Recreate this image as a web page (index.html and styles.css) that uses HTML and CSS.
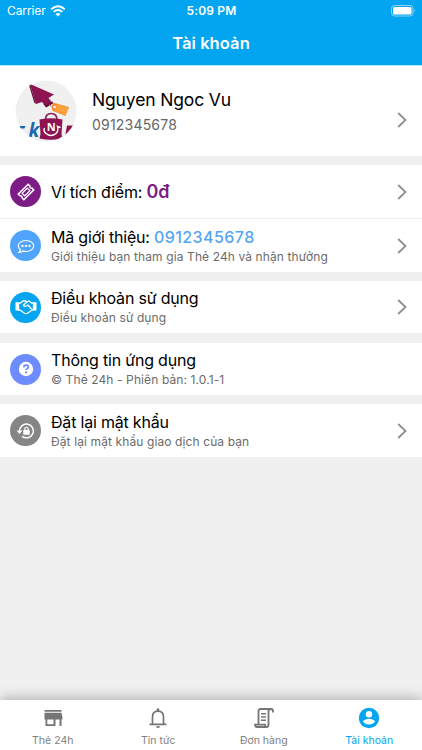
FILE: index.html
```
<!DOCTYPE html>
<html lang="vi">
<head>
<meta charset="utf-8">
<title>Tài khoản</title>
<link rel="stylesheet" href="styles.css">
</head>
<body>
<div class="app">
  <header class="header">
    <div class="status">
      <div class="carrier"><span>Carrier</span>
        <svg width="16" height="12" viewBox="0 0 15 12" fill="none" stroke="#fff" stroke-width="1.9"><path d="M.7 4.2Q7.5-1.8 14.3 4.2M3.1 6.9q4.4-3.8 8.800 0"/><path d="M5 9q2.500-2 5 0l-2.500 2.600z" fill="#fff" stroke="none"/></svg>
      </div>
      <span class="time">5:09 PM</span>
      <svg class="battery" width="25" height="12" viewBox="0 0 25 12"><rect x=".5" y=".5" width="21.500" height="10.500" rx="3" fill="none" stroke="#8bd3f8"/><rect x="2" y="2" width="18.500" height="7.500" rx="1.500" fill="#fff"/><path d="M23.200 4q1.800 1.700 0 3.600z" fill="#8bd3f8"/></svg>
    </div>
    <h1>Tài khoản</h1>
  </header>
  <main>
    <section class="card profile">
      <svg class="avatar" width="62" height="62" viewBox="0 0 62 62">
        <defs><clipPath id="round"><circle cx="31" cy="31" r="30.500"/></clipPath></defs>
        <g clip-path="url(#round)">
          <rect width="62" height="62" fill="#f0f0f0"/>
          <path d="M15 4l24 10.500-5.500 3.500 4 5-6 4-4.500-5-6 2z" fill="#8d1451"/>
          <path d="M15 4l6 20-1.800-1.500L14 5z" fill="#5d1038"/>
          <path d="M28 23.500l3 4 7-4-.5-2-6 3.300z" fill="#620c39"/>
          <path d="M34 24q2 4 6 2" fill="none" stroke="#976b79" stroke-width=".8"/>
          <path d="M38.500 22.800l15.500 4.200-3.500 9L37.500 30.800l-1-4z" fill="#f68b2d"/><path d="M42 24.500l11.500 3-3 8L40 31z" fill="#fba13d"/><circle cx="39.500" cy="27" r="1.300" fill="#fff"/>
          <text class="brand" x="13.500" y="57">k</text>
          <path d="M4 46h6.500l-1 2.500H4z" fill="#1769b3"/>
          <path d="M30.500 41q-.5-7.500 5.700-7.500T42 41" fill="none" stroke="#8d2558" stroke-width="1.700"/>
          <path d="M24.500 39.500q11.500-2.500 23 0L46.500 54l1 4.500q-11.500 2.500-23 0l1-4.500z" fill="#8d1451"/>
          <text class="mark" x="31.700" y="51">N</text>
          <path d="M29.500 48q-1.500 3 1.500 5.500 5 4 10 0 3-3 1.500-7l3 1" fill="none" stroke="#fff" stroke-width="1.400"/>
          <path d="M52 45.500h7v5h-4l-3 6h-2z" fill="#8d1451"/>
        </g>
      </svg>
      <div class="info"><div class="name">Nguyen Ngoc Vu</div><div class="phone">0912345678</div></div>
      <svg class="chevron" width="10" height="16" viewBox="0 0 10 16"><path d="M1.200 1l7.300 7-7.300 7"/></svg>
    </section>

    <div class="card">
      <div class="row">
        <span class="badge purple"><svg width="20" height="20" viewBox="0 0 20 20"><g transform="rotate(-45 10 10)" fill="none" stroke="#fff" stroke-width="1.500"><path d="M3 6h14v2.500a1.700 1.700 0 0 0 0 3V14H3v-2.500a1.700 1.700 0 0 0 0-3z"/><rect x="6.300" y="8.200" width="7.400" height="3.600" stroke-width="1.200"/></g></svg></span>
        <div class="info"><div class="title">Ví tích điểm: <b class="points">0đ</b></div></div>
        <svg class="chevron" width="10" height="16" viewBox="0 0 10 16"><path d="M1.200 1l7.300 7-7.300 7"/></svg>
      </div>
      <div class="row divided">
        <span class="badge blue"><svg width="20" height="20" viewBox="0 0 20 20"><path d="M10 4.500c4.500 0 7.700 2.500 7.700 5.500s-3.200 5.500-7.700 5.500q-1.700 0-3-.5-1.500 1.200-4 1.300 1.200-1.200 1.300-2.900-2-1.500-2-3.400c0-3 3.200-5.500 7.700-5.500z" fill="none" stroke="#fff" stroke-width="1.200"/><g fill="#fff"><circle cx="6.500" cy="10" r="1.150"/><circle cx="10" cy="10" r="1.150"/><circle cx="13.500" cy="10" r="1.150"/></g></svg></span>
        <div class="info"><div class="title">Mã giới thiệu: <span class="code">0912345678</span></div><div class="sub">Giới thiệu bạn tham gia Thẻ 24h và nhận thưởng</div></div>
        <svg class="chevron" width="10" height="16" viewBox="0 0 10 16"><path d="M1.200 1l7.300 7-7.300 7"/></svg>
      </div>
    </div>

    <div class="card">
      <div class="row short">
        <span class="badge cyan"><svg width="22" height="18" viewBox="0 0 22 18"><g fill="none" stroke="#fff" stroke-width="1.300" stroke-linejoin="round"><path d="M3.500 5h2l2.500-2h3l1.500.8L14 3l2.500 2h2v7H17l-4.500 3.200q-1.500.8-3 0L5 12H3.500z"/><path d="M12 4L8.500 7q.8 2.200 3.300.8L13 7l3.700 4.300"/></g><path d="M.5 4.300h3v8.200h-3zM18.500 4.300h3v8.200h-3z" fill="#fff"/></svg></span>
        <div class="info"><div class="title">Điều khoản sử dụng</div><div class="sub">Điều khoản sử dụng</div></div>
        <svg class="chevron" width="10" height="16" viewBox="0 0 10 16"><path d="M1.200 1l7.300 7-7.300 7"/></svg>
      </div>
    </div>

    <div class="card spaced">
      <div class="row short">
        <span class="badge indigo"><svg width="16" height="16" viewBox="0 0 16 16"><circle cx="8" cy="8" r="7.200" fill="#fff"/><path d="M5.700 6.400q.2-2.300 2.400-2.300 2.300 0 2.300 1.900 0 1.100-1.300 1.800-1 .5-1 1.300" fill="none" stroke="#6c8cff" stroke-width="1.700"/><circle cx="8.050" cy="11.400" r="1.100" fill="#6c8cff"/></svg></span>
        <div class="info"><div class="title">Thông tin ứng dụng</div><div class="sub">© Thẻ 24h - Phiên bản: 1.0.1-1</div></div>
      </div>
    </div>

    <div class="card">
      <div class="row">
        <span class="badge gray"><svg width="20" height="20" viewBox="0 0 20 20"><path d="M3.600 10.500a6.900 6.900 0 1 1 2.400 4.700" fill="none" stroke="#fff" stroke-width="1.500"/><path d="M.5 9.500h6l-3 3.400z" fill="#fff"/><rect x="7.300" y="8.800" width="6.400" height="5" rx=".6" fill="#fff"/><path d="M8.800 9V7.800q0-1.600 1.700-1.600t1.700 1.600V9" fill="none" stroke="#fff" stroke-width="1.100"/></svg></span>
        <div class="info"><div class="title">Đặt lại mật khẩu</div><div class="sub">Đặt lại mật khẩu giao dịch của bạn</div></div>
        <svg class="chevron" width="10" height="16" viewBox="0 0 10 16"><path d="M1.200 1l7.300 7-7.300 7"/></svg>
      </div>
    </div>
  </main>
  <nav class="tabs">
    <a class="tab"><svg width="24" height="24" viewBox="0 0 24 24"><path d="M3.500 4h17v1.700h-17zM3.500 6.800h17l1 5v1.700h-1V20h-2v-6.500h-4V20h-10v-6.500h-1v-1.700zM6.300 13.500v4.700h6.200v-4.700z" fill="#757575" fill-rule="evenodd"/></svg><span>Thẻ 24h</span></a>
    <a class="tab"><svg width="24" height="24" viewBox="0 0 24 24"><path d="M6.500 18.400V11q0-5.800 5.500-5.800T17.500 11v7.400M3.500 18.400h17" fill="none" stroke="#757575" stroke-width="1.700"/><path d="M10.700 5V3.500q0-1.300 1.300-1.300t1.300 1.300V5zM10 20.200h4q-.3 1.900-2 1.900t-2-1.900z" fill="#757575"/></svg><span>Tin tức</span></a>
    <a class="tab"><svg width="24" height="24" viewBox="0 0 24 24"><path d="M6.500 18V5q0-2 2-2h10.800q1.700 0 1.700 2.500v1M18.800 3q-2.300 0-2.300 2.500v13q0 2.500-2 2.500H5q-2 0-2-2.300h10q0 2.300 1.500 2.300" fill="none" stroke="#757575" stroke-width="1.800"/><path d="M9 7.700h5M9 11h5M9 14.300h5" stroke="#757575" stroke-width="1.500"/></svg><span>Đơn hàng</span></a>
    <a class="tab active"><svg width="24" height="24" viewBox="0 0 24 24"><circle cx="12" cy="12" r="10.200" fill="#03a5f1"/><circle cx="12" cy="8.200" r="3.200" fill="#fff"/><path d="M5.800 15.300q2-2.600 6.200-2.600t6.200 2.600Q16 18.600 12 18.600t-6.200-3.300z" fill="#fff"/></svg><span>Tài khoản</span></a>
  </nav>
</div>
</body>
</html>
```
FILE: styles.css
```
* { box-sizing: border-box; }
body { margin: 0; font-family: Inter, "Liberation Sans", sans-serif; }
.app { height: 750px; display: flex; flex-direction: column; background: #f0f0f0; overflow: hidden; }
.header { height: 66px; background: #03a5f1; color: #fff; border-bottom: 1px solid #b5e5fb; }
.status { display: grid; grid-template-columns: 1fr auto 1fr; align-items: center; height: 22px; padding: 0 6px 0 7px; font-size: 12px; line-height: 22px; }
.carrier { display: flex; align-items: center; gap: 4px; letter-spacing: -.1px; }
.time { font-weight: 600; letter-spacing: .15px; }
.battery { justify-self: end; }
h1 { margin: 0; font-size: 16.5px; font-weight: 600; line-height: 43px; text-align: center; letter-spacing: .08px; }
main { flex: 1; display: flex; flex-direction: column; gap: 9px; }
.card { background: #fff; }
.spaced { margin-top: 1px; }
.profile { height: 90px; display: flex; align-items: center; padding: 0 15px; }
.avatar { flex: none; margin-right: 15px; }
.profile .chevron { margin-top: 18px; }
.info { flex: 1; min-width: 0; padding-top: 1px; white-space: nowrap; color: #000; }
.name { font-size: 17.5px; line-height: 25px; letter-spacing: -.15px; }
.phone { margin-top: 1px; font-size: 14px; line-height: 23px; color: #666; letter-spacing: .2px; }
.row { height: 53px; display: flex; align-items: center; padding: 0 15px 0 10px; }
.divided { height: 54px; border-top: 1px solid #ededed; }
.short { height: 52px; }
.badge { width: 31px; height: 31px; border-radius: 50%; display: flex; align-items: center; justify-content: center; margin-right: 10px; flex: none; }
.purple { background: #7c1c84; }
.blue { background: #50a4fb; }
.cyan { background: #06a5f1; }
.indigo { background: #6c8cff; }
.gray { background: #858585; }
.title { font-size: 16px; line-height: 20px; letter-spacing: -.2px; }
.sub { margin-top: 1px; font-size: 12px; line-height: 18px; color: #6b6b6b; letter-spacing: .11px; }
.points { font-size: 18px; font-weight: 600; color: #7c1c84; }
.code { color: #55a5f5; font-weight: 500; letter-spacing: .42px; }
.chevron { flex: none; fill: none; stroke: #8e8e8e; stroke-width: 1.8; }
.tabs { height: 50px; display: grid; grid-template-columns: repeat(4, 1fr); background: #fff; box-shadow: 0 -2px 12px rgba(0,0,0,.27); position: relative; }
.tab { display: flex; flex-direction: column; align-items: center; padding-top: 6px; color: #808080; font-size: 10.5px; }
.tab span { line-height: 18px; margin-top: 2px; }
.active { color: #03a5f1; }
.brand { font: italic bold 19px "Open Sans", sans-serif; fill: #1769b3; }
.mark { font: bold 11px "Open Sans", sans-serif; fill: #fff; }
```
